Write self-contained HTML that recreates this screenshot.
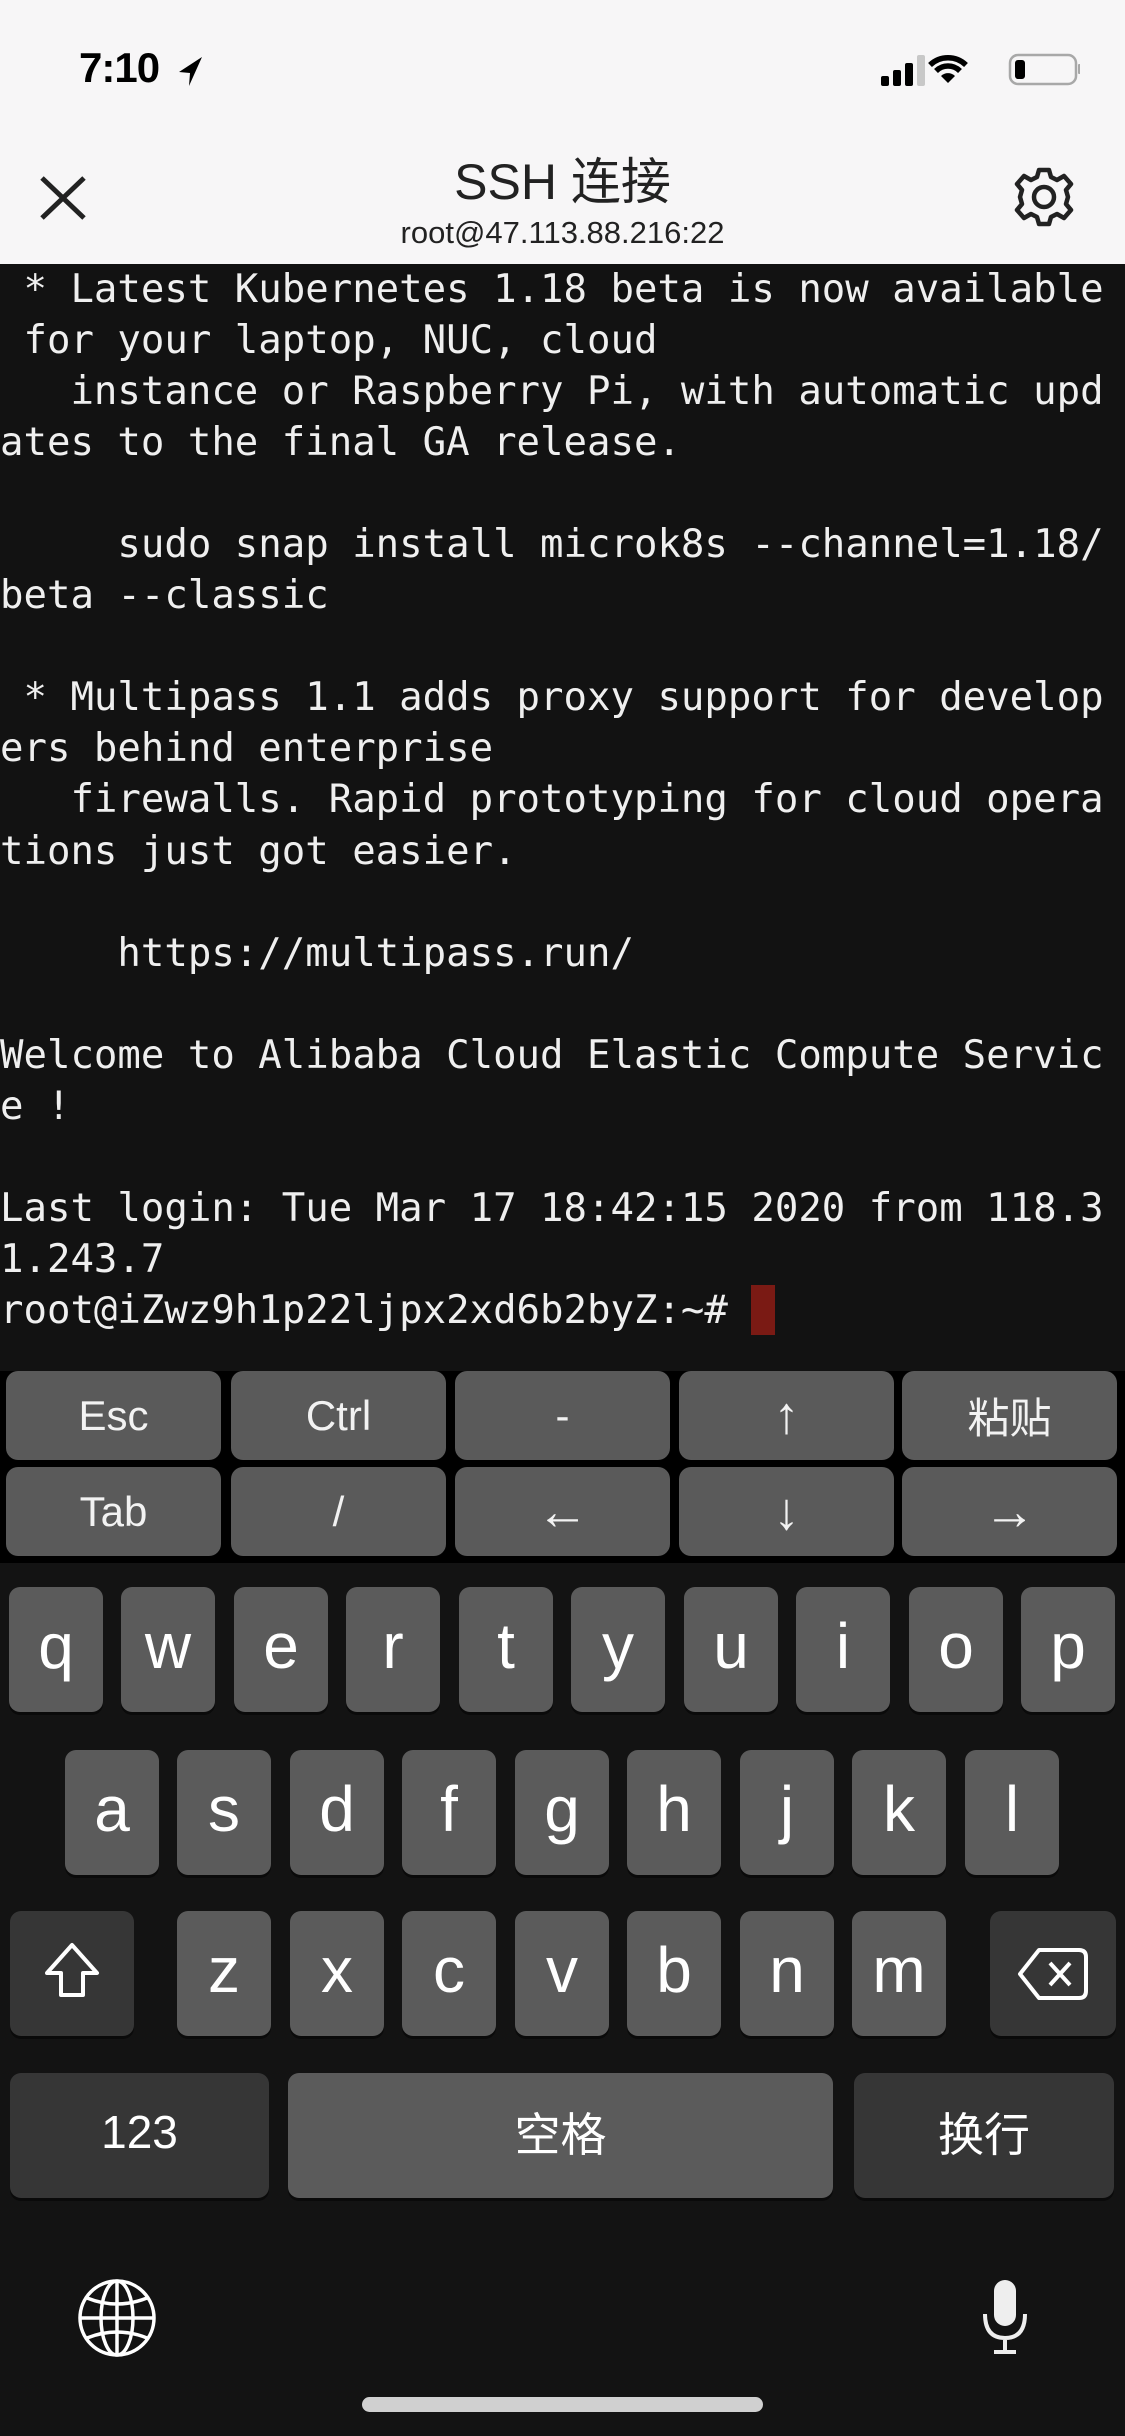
<!DOCTYPE html>
<html><head><meta charset="utf-8"><style>
*{margin:0;padding:0;box-sizing:border-box}
body{width:1125px;height:2436px;overflow:hidden;background:#131313;font-family:"Liberation Sans","Noto Sans CJK SC",sans-serif;position:relative}
.hdr{position:absolute;left:0;top:0;width:1125px;height:264px;background:#f7f6f7}
.abs{position:absolute}
.term{position:absolute;left:0;top:264px;width:1125px;height:1107px;background:#121212}
pre{position:absolute;left:0;top:264px;font-family:"DejaVu Sans Mono","Liberation Mono",monospace;font-size:39px;line-height:51.05px;color:#efefef;white-space:pre}
.tb{position:absolute;left:0;top:1371px;width:1125px;height:192px;background:#000}
.tk{position:absolute;width:215px;height:89px;background:#5a5a5a;border-radius:12px;color:#f2f2f2;font-size:42px;display:flex;align-items:center;justify-content:center}
.ar{font-size:52px}
.k{position:absolute;width:94px;height:125px;background:#5b5b5b;border-radius:11px;box-shadow:0 3px 0 #0a0a0a;color:#fff;font-size:64px;display:flex;align-items:center;justify-content:center;padding-bottom:8px}
.d{background:#363636}
</style></head><body>
<div class="hdr"></div>
<div class="abs" style="left:79px;top:44px;font-size:42px;font-weight:bold;color:#000;letter-spacing:-1px">7:10</div>
<svg class="abs" style="left:176px;top:54px" width="30" height="34" viewBox="0 0 30 34"><path d="M26 3 L3 18 L14 19 L13 32 Z" fill="#000"/></svg>
<svg class="abs" style="left:880px;top:52px" width="200" height="34" viewBox="0 0 200 34">
<rect x="1" y="24" width="8" height="10" rx="2" fill="#000"/><rect x="13" y="18" width="8" height="16" rx="2" fill="#000"/><rect x="25" y="11" width="8" height="23" rx="2" fill="#000"/><rect x="37" y="3" width="8" height="31" rx="2" fill="#c8c8c8"/>
<path d="M68 31 L61 24 A10 10 0 0 1 75 24 Z" fill="#000"/><path d="M56 19 A17 17 0 0 1 80 19" stroke="#000" stroke-width="5.5" fill="none"/><path d="M50 13 A26 26 0 0 1 86 13" stroke="#000" stroke-width="5.5" fill="none"/>
<rect x="130" y="3" width="66" height="29" rx="8" stroke="#a8a8a8" stroke-width="2.5" fill="none"/><rect x="135" y="8" width="10" height="19" rx="3" fill="#000"/><rect x="198" y="12" width="3" height="10" rx="1" fill="#a8a8a8"/>
</svg>
<div class="abs" style="left:0;width:1125px;top:142px;text-align:center;font-size:50px;color:#222">SSH 连接</div>
<div class="abs" style="left:0;width:1125px;top:215px;text-align:center;font-size:31px;color:#222">root@47.113.88.216:22</div>
<svg class="abs" style="left:39px;top:175px" width="48" height="46" viewBox="0 0 48 46"><path d="M3 3 L45 43 M45 3 L3 43" stroke="#222" stroke-width="5"/></svg>
<svg class="abs" style="left:1013px;top:166px" width="62" height="62" viewBox="-31 -31 62 62"><g fill="none" stroke="#222" stroke-width="4.5"><path d="M-5 -27 L5 -27 L7 -20 L13 -17 L20 -21 L27 -13 L22 -7 L24 0 L22 7 L27 13 L20 21 L13 17 L7 20 L5 27 L-5 27 L-7 20 L-13 17 L-20 21 L-27 13 L-22 7 L-24 0 L-22 -7 L-27 -13 L-20 -21 L-13 -17 L-7 -20 Z" stroke-linejoin="round"/><circle r="10"/></g></svg>
<div class="term"></div>
<pre> * Latest Kubernetes 1.18 beta is now available
 for your laptop, NUC, cloud
   instance or Raspberry Pi, with automatic upd
ates to the final GA release.

     sudo snap install microk8s --channel=1.18/
beta --classic

 * Multipass 1.1 adds proxy support for develop
ers behind enterprise
   firewalls. Rapid prototyping for cloud opera
tions just got easier.

     https://multipass.run/

Welcome to Alibaba Cloud Elastic Compute Servic
e !

Last login: Tue Mar 17 18:42:15 2020 from 118.3
1.243.7
root@iZwz9h1p22ljpx2xd6b2byZ:~# </pre>
<div class="abs" style="left:751px;top:1285px;width:24px;height:50px;background:#7a1a14"></div>
<div class="tb"></div>
<div class="tk" style="left:6px;top:1371px">Esc</div>
<div class="tk" style="left:231px;top:1371px">Ctrl</div>
<div class="tk" style="left:455px;top:1371px">-</div>
<div class="tk ar" style="left:679px;top:1371px">↑</div>
<div class="tk" style="left:902px;top:1371px">粘贴</div>
<div class="tk" style="left:6px;top:1467px">Tab</div>
<div class="tk" style="left:231px;top:1467px">/</div>
<div class="tk ar" style="left:455px;top:1467px">←</div>
<div class="tk ar" style="left:679px;top:1467px">↓</div>
<div class="tk ar" style="left:902px;top:1467px">→</div>

<div class="k" style="left:9px;top:1587px">q</div>
<div class="k" style="left:121px;top:1587px">w</div>
<div class="k" style="left:234px;top:1587px">e</div>
<div class="k" style="left:346px;top:1587px">r</div>
<div class="k" style="left:459px;top:1587px">t</div>
<div class="k" style="left:571px;top:1587px">y</div>
<div class="k" style="left:684px;top:1587px">u</div>
<div class="k" style="left:796px;top:1587px">i</div>
<div class="k" style="left:909px;top:1587px">o</div>
<div class="k" style="left:1021px;top:1587px">p</div>

<div class="k" style="left:65px;top:1750px">a</div>
<div class="k" style="left:177px;top:1750px">s</div>
<div class="k" style="left:290px;top:1750px">d</div>
<div class="k" style="left:402px;top:1750px">f</div>
<div class="k" style="left:515px;top:1750px">g</div>
<div class="k" style="left:627px;top:1750px">h</div>
<div class="k" style="left:740px;top:1750px">j</div>
<div class="k" style="left:852px;top:1750px">k</div>
<div class="k" style="left:965px;top:1750px">l</div>

<div class="k d" style="left:10px;top:1911px;width:124px"><svg width="60" height="60" viewBox="0 0 60 60"><path d="M30 5 L55 33 L41 33 L41 55 L19 55 L19 33 L5 33 Z" fill="none" stroke="#fff" stroke-width="4" stroke-linejoin="round"/></svg></div>
<div class="k" style="left:177px;top:1911px">z</div>
<div class="k" style="left:290px;top:1911px">x</div>
<div class="k" style="left:402px;top:1911px">c</div>
<div class="k" style="left:515px;top:1911px">v</div>
<div class="k" style="left:627px;top:1911px">b</div>
<div class="k" style="left:740px;top:1911px">n</div>
<div class="k" style="left:852px;top:1911px">m</div>
<div class="k d" style="left:990px;top:1911px;width:126px;padding-bottom:0"><svg width="72" height="54" viewBox="0 0 72 54"><path d="M22 3 L62 3 Q69 3 69 10 L69 44 Q69 51 62 51 L22 51 L3 27 Z" fill="none" stroke="#fff" stroke-width="4" stroke-linejoin="round"/><path d="M33 16 L53 38 M53 16 L33 38" stroke="#fff" stroke-width="4"/></svg></div>

<div class="k d" style="left:10px;top:2073px;width:259px;font-size:46px">123</div>
<div class="k" style="left:288px;top:2073px;width:545px;font-size:46px">空格</div>
<div class="k d" style="left:854px;top:2073px;width:260px;font-size:46px">换行</div>

<svg class="abs" style="left:77px;top:2278px" width="80" height="80" viewBox="0 0 80 80"><g fill="none" stroke="#fff" stroke-width="3.5"><circle cx="40" cy="40" r="37"/><ellipse cx="40" cy="40" rx="16" ry="37"/><path d="M40 3 L40 77 M3 40 L77 40 M10 20 Q40 32 70 20 M10 60 Q40 48 70 60"/></g></svg>
<svg class="abs" style="left:980px;top:2278px" width="50" height="80" viewBox="0 0 50 80"><rect x="14" y="2" width="22" height="46" rx="11" fill="#eee"/><path d="M5 36 Q5 60 25 60 Q45 60 45 36 M25 60 L25 73 M14 74 L36 74" fill="none" stroke="#eee" stroke-width="4"/></svg>
<div class="abs" style="left:362px;top:2397px;width:401px;height:15px;border-radius:8px;background:#d0d0d0"></div>
</body></html>
